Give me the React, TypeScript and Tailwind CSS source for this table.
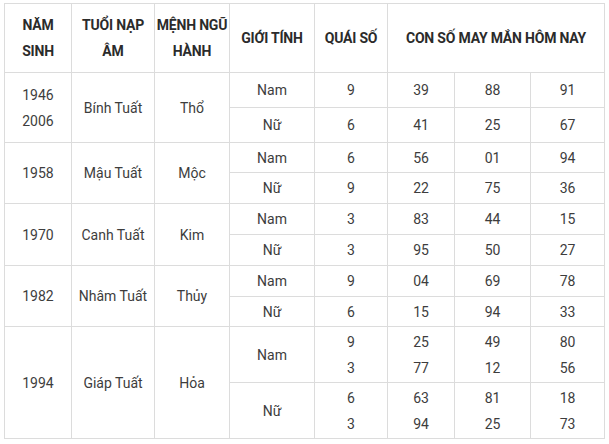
const groups = [
  {
    year: ['1946', '2006'],
    tuoi: 'Bính Tuất',
    menh: 'Thổ',
    h: [35, 35],
    rows: [
      { g: 'Nam', q: ['9'], n: [['39'], ['88'], ['91']] },
      { g: 'Nữ', q: ['6'], n: [['41'], ['25'], ['67']] },
    ],
  },
  {
    year: ['1958'],
    tuoi: 'Mậu Tuất',
    menh: 'Mộc',
    h: [30, 31],
    rows: [
      { g: 'Nam', q: ['6'], n: [['56'], ['01'], ['94']] },
      { g: 'Nữ', q: ['9'], n: [['22'], ['75'], ['36']] },
    ],
  },
  {
    year: ['1970'],
    tuoi: 'Canh Tuất',
    menh: 'Kim',
    h: [31, 31],
    rows: [
      { g: 'Nam', q: ['3'], n: [['83'], ['44'], ['15']] },
      { g: 'Nữ', q: ['3'], n: [['95'], ['50'], ['27']] },
    ],
  },
  {
    year: ['1982'],
    tuoi: 'Nhâm Tuất',
    menh: 'Thủy',
    h: [31, 30],
    rows: [
      { g: 'Nam', q: ['9'], n: [['04'], ['69'], ['78']] },
      { g: 'Nữ', q: ['6'], n: [['15'], ['94'], ['33']] },
    ],
  },
  {
    year: ['1994'],
    tuoi: 'Giáp Tuất',
    menh: 'Hỏa',
    h: [56, 56],
    rows: [
      { g: 'Nam', q: ['9', '3'], n: [['25', '77'], ['49', '12'], ['80', '56']] },
      { g: 'Nữ', q: ['6', '3'], n: [['63', '94'], ['81', '25'], ['18', '73']] },
    ],
  },
];

function Lines({ items }: { items: string[] }) {
  return (
    <>
      {items.map((t, i) => (
        <div key={i}>{t}</div>
      ))}
    </>
  );
}

const td = 'border border-[#dcdcdc] p-0 text-center align-middle';

export default function App() {
  return (
    <div className="min-h-screen bg-white pl-[4px] pt-[3px] font-['Roboto',sans-serif] text-[14px] leading-[26px] text-[#3d3d3d]">
      <table className="w-[600px] table-fixed border-collapse">
        <colgroup>
          <col className="w-[67px]" />
          <col className="w-[83px]" />
          <col className="w-[75px]" />
          <col className="w-[85px]" />
          <col className="w-[73px]" />
          <col className="w-[67px]" />
          <col className="w-[76px]" />
          <col className="w-[74px]" />
        </colgroup>
        <thead>
          <tr className="h-[69px] font-bold tracking-[-0.2px] text-[#2b2b2b]">
            <th className={td}>
              NĂM
              <br />
              SINH
            </th>
            <th className={td}>
              TUỔI NẠP
              <br />
              ÂM
            </th>
            <th className={td}>
              MỆNH NGŨ
              <br />
              HÀNH
            </th>
            <th className={td}>GIỚI TÍNH</th>
            <th className={td}>QUÁI SỐ</th>
            <th className={td} colSpan={3}>
              CON SỐ MAY MẮN HÔM NAY
            </th>
          </tr>
        </thead>
        <tbody>
          {groups.map((grp) =>
            grp.rows.map((r, i) => (
              <tr key={grp.tuoi + i} style={{ height: grp.h[i] }}>
                {i === 0 && (
                  <>
                    <td className={td} rowSpan={2}>
                      <Lines items={grp.year} />
                    </td>
                    <td className={td} rowSpan={2}>
                      {grp.tuoi}
                    </td>
                    <td className={td} rowSpan={2}>
                      {grp.menh}
                    </td>
                  </>
                )}
                <td className={td}>{r.g}</td>
                <td className={td}>
                  <Lines items={r.q} />
                </td>
                {r.n.map((c, j) => (
                  <td key={j} className={td}>
                    <Lines items={c} />
                  </td>
                ))}
              </tr>
            ))
          )}
        </tbody>
      </table>
    </div>
  );
}
